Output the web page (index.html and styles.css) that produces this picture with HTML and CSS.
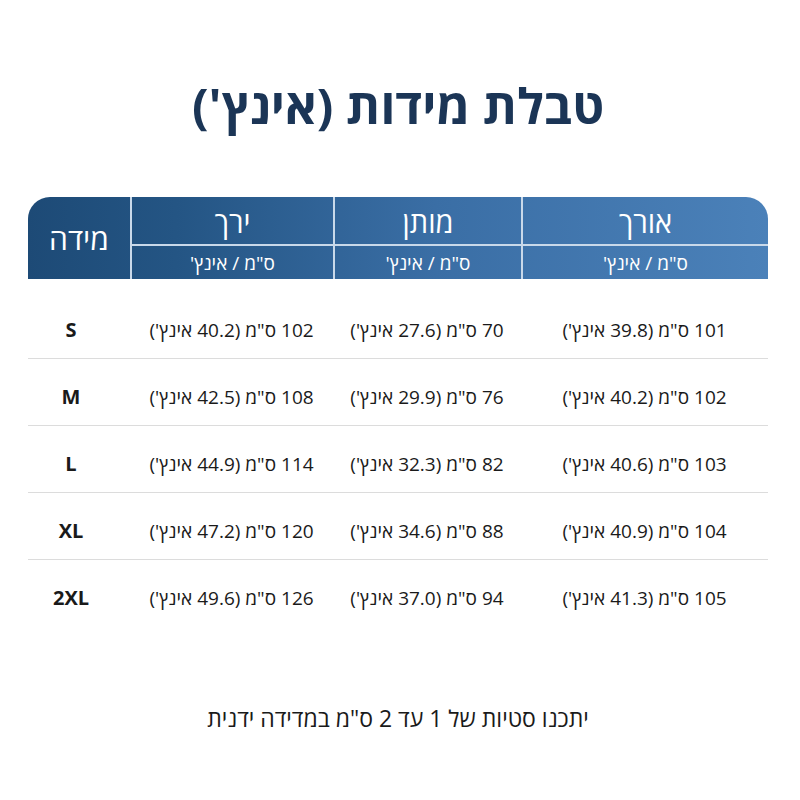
FILE: index.html
```html
<!DOCTYPE html>
<html lang="he" dir="rtl">
<head>
<meta charset="utf-8">
<title>טבלת מידות</title>
<link rel="stylesheet" href="styles.css">
</head>
<body>
<div class="page">
  <h1 class="title">טבלת מידות (אינץ')</h1>
  <div class="chart">
    <div class="head">
      <div class="hcell top c1">אורך</div>
      <div class="hcell top c2">מותן</div>
      <div class="hcell top c3">ירך</div>
      <div class="hcell size">מידה</div>
      <div class="hcell sub c1">ס"מ / אינץ'</div>
      <div class="hcell sub c2">ס"מ / אינץ'</div>
      <div class="hcell sub c3">ס"מ / אינץ'</div>
    </div>
    <div class="rows">
      <div class="row">
        <div class="cell">101 ס"מ (39.8 אינץ')</div>
        <div class="cell">70 ס"מ (27.6 אינץ')</div>
        <div class="cell">102 ס"מ (40.2 אינץ')</div>
        <div class="cell sz">S</div>
      </div>
      <div class="row">
        <div class="cell">102 ס"מ (40.2 אינץ')</div>
        <div class="cell">76 ס"מ (29.9 אינץ')</div>
        <div class="cell">108 ס"מ (42.5 אינץ')</div>
        <div class="cell sz">M</div>
      </div>
      <div class="row">
        <div class="cell">103 ס"מ (40.6 אינץ')</div>
        <div class="cell">82 ס"מ (32.3 אינץ')</div>
        <div class="cell">114 ס"מ (44.9 אינץ')</div>
        <div class="cell sz">L</div>
      </div>
      <div class="row">
        <div class="cell">104 ס"מ (40.9 אינץ')</div>
        <div class="cell">88 ס"מ (34.6 אינץ')</div>
        <div class="cell">120 ס"מ (47.2 אינץ')</div>
        <div class="cell sz">XL</div>
      </div>
      <div class="row last">
        <div class="cell">105 ס"מ (41.3 אינץ')</div>
        <div class="cell">94 ס"מ (37.0 אינץ')</div>
        <div class="cell">126 ס"מ (49.6 אינץ')</div>
        <div class="cell sz">2XL</div>
      </div>
    </div>
  </div>
  <p class="note">יתכנו סטיות של 1 עד 2 ס"מ במדידה ידנית</p>
</div>
</body>
</html>
```

FILE: styles.css
```css
html, body {
  margin: 0;
  padding: 0;
  background: #ffffff;
}

body {
  font-family: "Open Sans", "DejaVu Sans", sans-serif;
  color: #1a1a1a;
}

.page {
  direction: rtl;
  padding: 76px 32px 0 28px;
}

.title {
  margin: 0;
  text-align: center;
  font-size: 49px;
  line-height: 58px;
  font-weight: 700;
  color: #1b3556;
}

.chart {
  margin-top: 63px;
}

.head {
  display: grid;
  grid-template-columns: 247px 188px 203px 1fr;
  grid-template-rows: 49px 33px;
  border-radius: 22px 22px 0 0;
  background: linear-gradient(to left, #4b81b9 0%, #3a6ea5 45%, #245584 80%, #1d4a76 100%);
  color: #ffffff;
  overflow: hidden;
}

.hcell {
  display: flex;
  align-items: center;
  justify-content: center;
  border-left: 2px solid #c9d9ea;
}

.hcell.top {
  grid-row: 1;
  font-size: 29px;
  border-bottom: 2px solid #c9d9ea;
  padding-top: 2px;
}

.hcell.sub {
  grid-row: 2;
  font-size: 19px;
}

.hcell.c1 { grid-column: 1; }
.hcell.c2 { grid-column: 2; }
.hcell.c3 { grid-column: 3; }

.hcell.size {
  grid-column: 4;
  grid-row: 1 / 3;
  font-size: 30px;
  border-left: none;
}

.rows {
  margin-top: 13px;
}

.row {
  display: grid;
  grid-template-columns: 247px 188px 203px 1fr;
  padding: 26px 0 16px;
  border-bottom: 1px solid #dcdcdc;
}

.row.last {
  border-bottom: none;
}

.cell {
  text-align: center;
  font-size: 19px;
  line-height: 24px;
}

.cell.sz {
  font-weight: 700;
  font-size: 20px;
  padding-right: 16px;
}

.note {
  margin: 77px 0 0;
  text-align: center;
  font-size: 23px;
  line-height: 30px;
  color: #1a1a1a;
}
```
